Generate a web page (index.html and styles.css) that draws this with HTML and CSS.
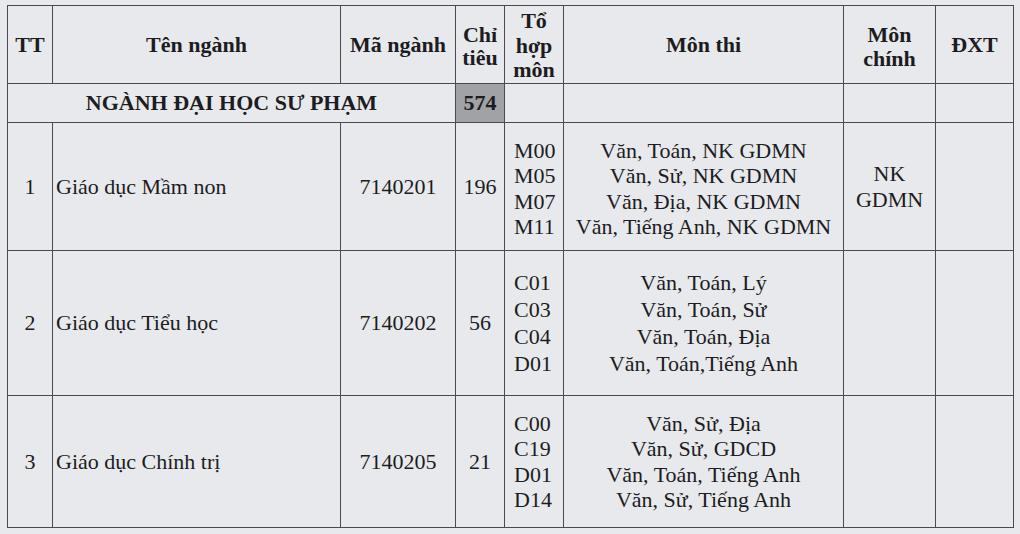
FILE: index.html
```html
<!DOCTYPE html>
<html lang="vi">
<head>
<meta charset="utf-8">
<link rel="stylesheet" href="styles.css">
</head>
<body>
<table class="tbl">
  <colgroup>
    <col class="c-tt"><col class="c-ten"><col class="c-ma"><col class="c-ct">
    <col class="c-th"><col class="c-mt"><col class="c-mc"><col class="c-dxt">
  </colgroup>
  <thead>
    <tr class="r-head">
      <th>TT</th>
      <th>Tên ngành</th>
      <th>Mã ngành</th>
      <th class="stack2">Chỉ<br>tiêu</th>
      <th class="stack3">Tổ<br>hợp<br>môn</th>
      <th>Môn thi</th>
      <th class="stack2b">Môn<br>chính</th>
      <th>ĐXT</th>
    </tr>
  </thead>
  <tbody>
    <tr class="r-sec">
      <td colspan="3" class="sec-title">NGÀNH ĐẠI HỌC SƯ PHẠM</td>
      <td class="sec-num">574</td>
      <td></td><td></td><td></td><td></td>
    </tr>
    <tr class="r-1">
      <td class="ctr">1</td>
      <td class="name">Giáo dục Mầm non</td>
      <td class="ctr">7140201</td>
      <td class="ctr">196</td>
      <td class="codes">M00<br>M05<br>M07<br>M11</td>
      <td class="subj">Văn, Toán, NK GDMN<br>Văn, Sử, NK GDMN<br>Văn, Địa, NK GDMN<br>Văn, Tiếng Anh, NK GDMN</td>
      <td class="main">NK<br>GDMN</td>
      <td></td>
    </tr>
    <tr class="r-2">
      <td class="ctr">2</td>
      <td class="name">Giáo dục Tiểu học</td>
      <td class="ctr">7140202</td>
      <td class="ctr">56</td>
      <td class="codes">C01<br>C03<br>C04<br>D01</td>
      <td class="subj">Văn, Toán, Lý<br>Văn, Toán, Sử<br>Văn, Toán, Địa<br>Văn, Toán,Tiếng Anh</td>
      <td></td>
      <td></td>
    </tr>
    <tr class="r-3">
      <td class="ctr">3</td>
      <td class="name">Giáo dục Chính trị</td>
      <td class="ctr">7140205</td>
      <td class="ctr">21</td>
      <td class="codes">C00<br>C19<br>D01<br>D14</td>
      <td class="subj">Văn, Sử, Địa<br>Văn, Sử, GDCD<br>Văn, Toán, Tiếng Anh<br>Văn, Sử, Tiếng Anh</td>
      <td></td>
      <td></td>
    </tr>
  </tbody>
</table>
</body>
</html>
```

FILE: styles.css
```css
html, body {
  margin: 0;
  padding: 0;
  background: #e8e9ec;
}
body {
  padding: 5px 0 0 7px;
  font-family: "Liberation Serif", "Times New Roman", serif;
  color: #1c1c22;
}
.tbl {
  border-collapse: collapse;
  table-layout: fixed;
  width: 1006px;
  font-size: 22px;
}
.tbl th, .tbl td {
  border: 1.5px solid #4a4a4e;
  padding: 0;
  vertical-align: middle;
}
.c-tt { width: 45px; }
.c-ten { width: 288px; }
.c-ma { width: 115px; }
.c-ct { width: 49px; }
.c-th { width: 59px; }
.c-mt { width: 280px; }
.c-mc { width: 92px; }
.c-dxt { width: 78px; }

.r-head { height: 78px; }
.r-head th {
  font-weight: bold;
  text-align: center;
  line-height: 23px;
}
.r-head th.stack2 { line-height: 23px; padding-top: 3px; }
.r-head th.stack3 { line-height: 24.5px; padding-top: 3px; }
.r-head th.stack2b { line-height: 24px; padding-top: 4px; }
.r-sec { height: 39px; }
.r-1 { height: 128px; }
.r-2 { height: 145px; }
.r-3 { height: 132px; }

.sec-title {
  text-align: center;
  font-weight: bold;
}
.sec-num {
  background: #a0a2a5;
  font-weight: bold;
  text-align: center;
}
.ctr { text-align: center; }
.name { padding-left: 3px !important; }
.codes {
  padding-left: 9px !important;
  line-height: 25.3px;
}
.subj {
  text-align: center;
  line-height: 25.3px;
}
.r-1 .codes, .r-1 .subj { padding-top: 4px; }
.r-2 .codes, .r-2 .subj { line-height: 27px; }
.main {
  text-align: center;
  line-height: 26px;
}
```
